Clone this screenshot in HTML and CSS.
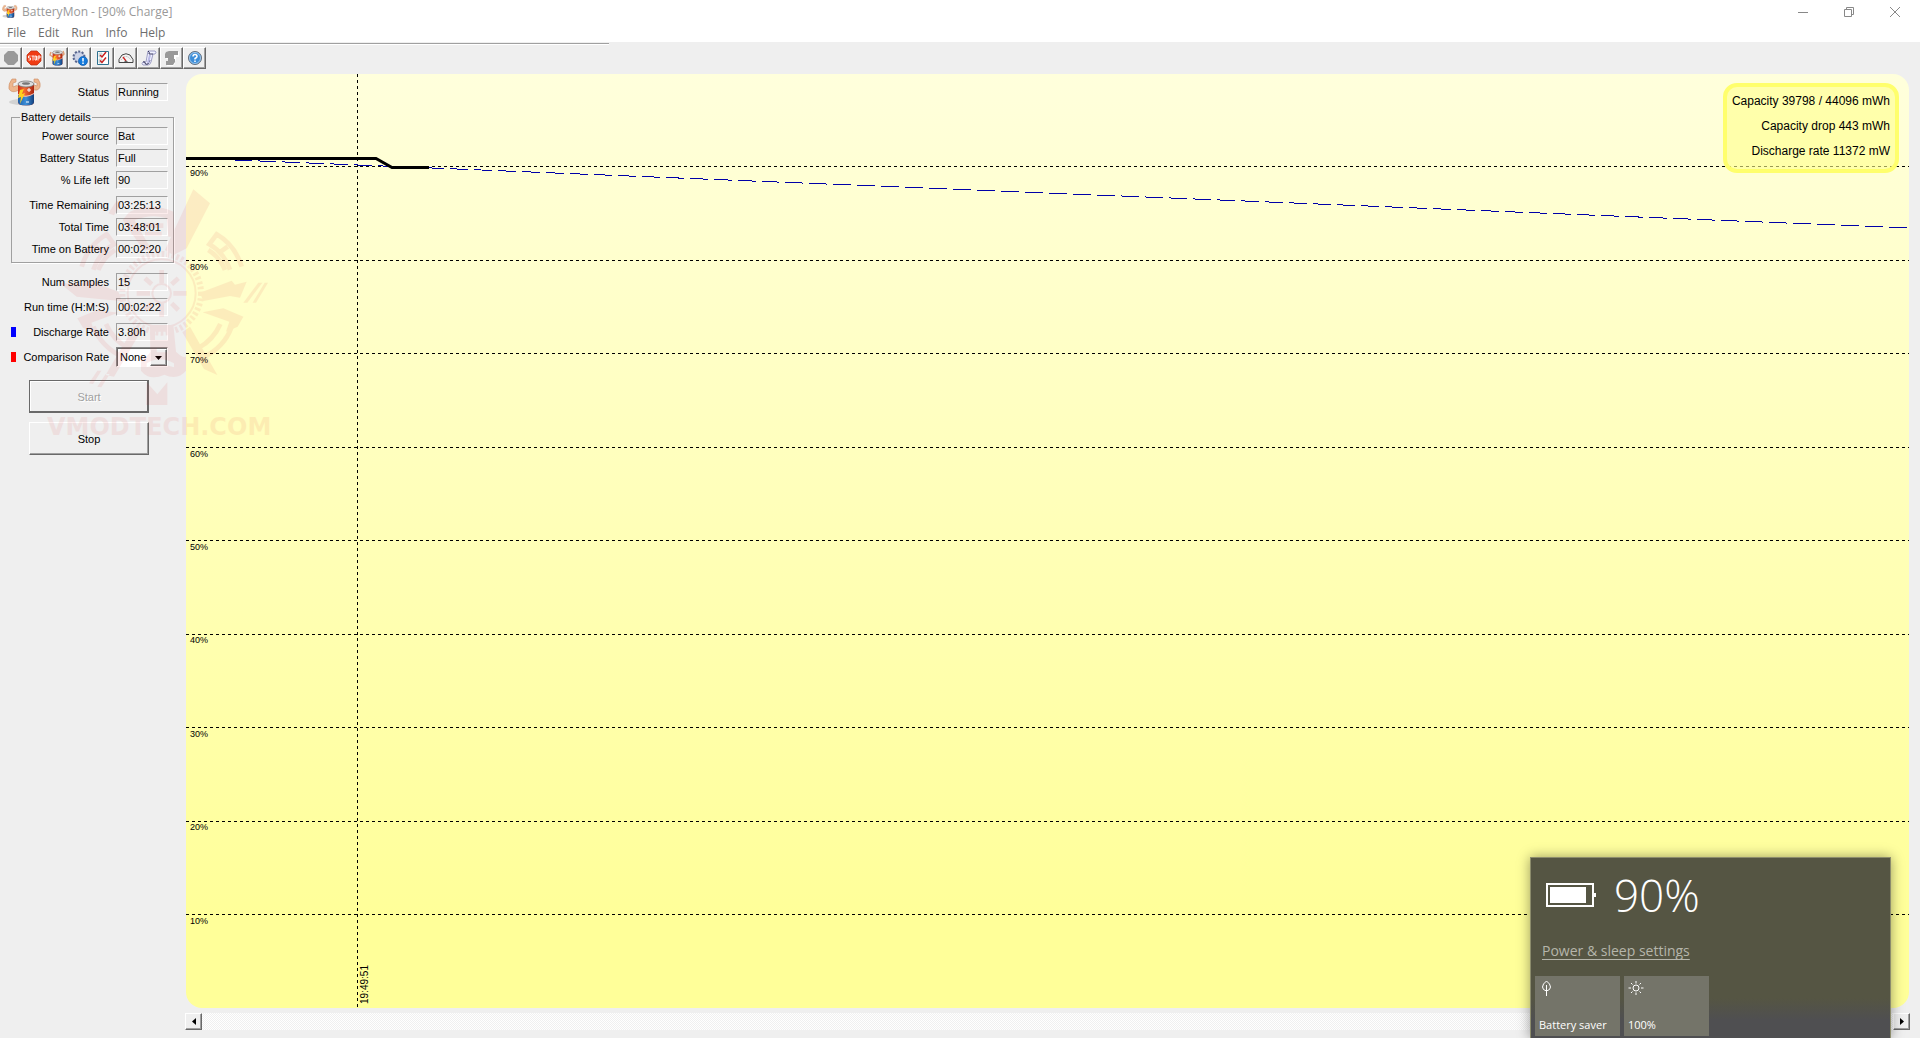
FILE: index.html
```html
<!DOCTYPE html>
<html lang="en">
  <head>
    <meta charset="utf-8">
    <title>BatteryMon - [90% Charge]</title>
    <link rel="stylesheet" href="styles.css">
  </head>
  <body>
    <svg class="defs" aria-hidden="true">
      <defs>
        <linearGradient id="red-can" x1="0" x2="1">
          <stop offset="0" stop-color="#c8321a" />
          <stop offset="0.4" stop-color="#f56a32" />
          <stop offset="1" stop-color="#a82410" />
        </linearGradient>
        <linearGradient id="blue-can" x1="0" x2="1">
          <stop offset="0" stop-color="#1d5fa8" />
          <stop offset="0.5" stop-color="#3d8fd8" />
          <stop offset="1" stop-color="#123f7c" />
        </linearGradient>
        <symbol id="can" viewBox="0 0 18 26">
          <path d="M1 4v18q0 3.500 8 3.500t8-3.500V4z" fill="url(#red-can)" />
          <path d="M1 15q8 4 16-1v8q0 3.500-8 3.500T1 22z" fill="url(#blue-can)" />
          <path d="M1 14.500q8 4 16-1" fill="none" stroke="#fff" stroke-width="0.700" />
          <ellipse cx="9" cy="4" rx="8" ry="3" fill="#ddd" stroke="#777" stroke-width="0.800" />
          <ellipse cx="9" cy="3.500" rx="4" ry="1.300" fill="#777" />
          <path d="M3 10l4-1-2 5 3-1-5 11 1-7-3 1z" fill="#ffd21e" />
          <path d="M10 10h4M12 8v4M9 22h3" stroke="#fff" stroke-width="1" />
        </symbol>
        <symbol id="strong-battery" viewBox="0 0 34 30">
          <ellipse cx="13" cy="25" rx="12" ry="3" fill="#d2d2d2" />
          <path d="M11 13q-7 4-10-1-1-5 3-10l4 0 0 3-3 1 0 4q4-3 7 0z" fill="#eeb68d" stroke="#c98b63" stroke-width="0.600" />
          <path d="M24 12q6 3 8-2 1-4-2-8l-4 0 0 3 3 1 0 3q-3-2-6 0z" fill="#eeb68d" stroke="#c98b63" stroke-width="0.600" />
          <use href="#can" x="9" y="3" width="18" height="26" />
        </symbol>
      </defs>
    </svg>

    <header class="titlebar">
      <svg class="app-icon" aria-hidden="true"><use href="#strong-battery" /></svg>
      <h1>BatteryMon - [90% Charge]</h1>
      <div class="window-controls">
        <button type="button" aria-label="Minimize"><svg viewBox="0 0 10 10"><path d="M0 5.500h10" /></svg></button>
        <button type="button" aria-label="Restore"><svg viewBox="0 0 10 10"><path d="M.5 2.500h7v7h-7zM2.500 2.500v-2h7v7h-2" /></svg></button>
        <button type="button" aria-label="Close"><svg viewBox="0 0 10 10"><path d="M0 0l10 10M10 0L0 10" /></svg></button>
      </div>
    </header>

    <nav class="menubar">
      <button type="button">File</button>
      <button type="button">Edit</button>
      <button type="button">Run</button>
      <button type="button">Info</button>
      <button type="button">Help</button>
    </nav>

    <div class="toolbar">
      <div class="toolbar-rule"></div>
      <div class="tools">
        <button type="button" aria-label="Start" disabled><svg viewBox="0 0 16 16"><path d="M5.500 2h6L15 5.500v6L11.500 15h-6L2 11.500v-6z" fill="#fff" /><path d="M5 1h6l4 4v6l-4 4H5l-4-4V5z" fill="#999" /></svg></button>
        <button type="button" aria-label="Stop"><svg viewBox="0 0 16 16"><path d="M5 1h6l4 4v6l-4 4H5l-4-4V5z" fill="#f03c14" stroke="#b8280c" stroke-width="0.700" /><path d="M4.500 6h-2v2h2v2h-2M5.500 6h3M7 6v4.500M9 6h1.500v4H9zM12 10.500V6h2v2h-2" fill="none" stroke="#fff" stroke-width="0.900" /></svg></button>
        <button type="button" aria-label="Battery information"><svg viewBox="0 0 16 16"><path d="M4 7L1 5l1-3M13 6l2-2-1-3" fill="none" stroke="#e0a078" stroke-width="1.500" /><use href="#can" x="3" y="0" width="11" height="16" /></svg></button>
        <button type="button" aria-label="System information"><svg viewBox="0 0 16 16"><circle cx="7" cy="7" r="5.500" fill="#b4bdd8" stroke="#57658c" stroke-width="2" stroke-dasharray="2 1.500" /><circle cx="7" cy="7" r="4" fill="#cdd3e6" /><circle cx="11" cy="11" r="4.500" fill="#147adb" stroke="#0c50a0" stroke-width="0.600" /><path d="M11 8v3.500M11 12.500v1.500" stroke="#fff" stroke-width="1.500" /></svg></button>
        <button type="button" aria-label="Configuration"><svg viewBox="0 0 16 16"><path d="M2.500 1.500h11v13h-11z" fill="#fff" stroke="#2e7190" /><path d="M4 3h3v4H4zM4 9h3v4H4z" fill="#e6eef2" stroke="#9bb" stroke-width="0.500" /><path d="M5 5l2 2 4-5M5 10.500l2 2 4-5" fill="none" stroke="#c82020" stroke-width="1.500" /></svg></button>
        <button type="button" aria-label="Discharge gauge"><svg viewBox="0 0 16 16"><path d="M1 12.500V9.500l3-4.500q4-2.500 8 0l3 4.500v3z" fill="#f4f4f4" stroke="#444" /><path d="M3 10q5-7 10 0" fill="none" stroke="#aaa" stroke-dasharray="1 1" /><path d="M8 11l-3-4" stroke="#d02020" stroke-width="1.300" /><path d="M6 12q2-3 4 0" fill="#666" /></svg></button>
        <button type="button" aria-label="View log"><svg viewBox="0 0 16 16"><path d="M7 1h7q2 1 0 3h-2l-2 8q-1 3-3 3H2q-2-1 0-3h3z" fill="#f1f2ff" stroke="#8888b8" stroke-width="0.800" /><path d="M7 1q2 1 1 3h4M2 12q2-1 2 1t3 1l2-4" fill="none" stroke="#34345c" /><path d="M9 5l-2 8" stroke="#b9b9e6" stroke-width="2" /></svg></button>
        <button type="button" aria-label="Close log" disabled><svg viewBox="0 0 16 16"><path d="M3 2h12v5h-3v3l-1 1v3l-2 2H3v-4h2V9H2z" fill="#fff" /><path d="M2 2l3-1h9v4h-4v4h1v3l-2 3H2v-4h2V8H1V4z" fill="#999" /></svg></button>
        <button type="button" aria-label="Help"><svg viewBox="0 0 16 16"><circle cx="8" cy="8" r="6.500" fill="#3d8ed9" stroke="#666f7c" /><circle cx="8" cy="8" r="5.500" fill="none" stroke="#c4def4" stroke-width="0.700" /><path d="M6 6.500q0-2 2-2t2 2q0 1-2 2v1M8 10.500V12" fill="none" stroke="#fff" stroke-width="1.500" /></svg></button>
      </div>
    </div>

    <main class="workspace">
      <section class="sidebar">
        <div class="status">
          <svg class="mascot" aria-hidden="true"><use href="#strong-battery" /></svg>
          <label for="status">Status</label>
          <output id="status">Running</output>
        </div>

        <fieldset class="details">
          <legend>Battery details</legend>
          <div class="field"><label for="source">Power source</label><output id="source">Bat</output></div>
          <div class="field"><label for="battery-status">Battery Status</label><output id="battery-status">Full</output></div>
          <div class="field"><label for="life">% Life left</label><output id="life">90</output></div>
          <div class="field times"><label for="remaining">Time Remaining</label><output id="remaining">03:25:13</output></div>
          <div class="field"><label for="total">Total Time</label><output id="total">03:48:01</output></div>
          <div class="field"><label for="on-battery">Time on Battery</label><output id="on-battery">00:02:20</output></div>
        </fieldset>

        <div class="samples">
          <div class="field"><label for="samples">Num samples</label><output id="samples">15</output></div>
          <div class="field"><label for="run-time">Run time (H:M:S)</label><output id="run-time">00:02:22</output></div>
          <div class="field"><i class="key discharge"></i><label for="rate">Discharge Rate</label><output id="rate">3.80h</output></div>
          <div class="field">
            <i class="key comparison"></i><label for="compare">Comparison Rate</label>
            <div class="combo">
              <select id="compare"><option>None</option></select>
              <span class="drop"><svg viewBox="0 0 7 4"><path d="M0 0h7L3.500 4z" /></svg></span>
            </div>
          </div>
        </div>

        <div class="actions">
          <button class="start" type="button" disabled>Start</button>
          <button type="button">Stop</button>
        </div>
      </section>

      <section class="graph">
        <div class="chart">
          <svg class="plot" viewBox="0 0 1723 934" preserveAspectRatio="none" aria-hidden="true">
            <path class="grid" d="M0 92H1723M0 186H1723M0 279H1723M0 373H1723M0 466H1723M0 560H1723M0 653H1723M0 747H1723M0 840H1723M171 0V934" />
            <path class="trend" d="M0 84L1723 154" />
            <path class="charge" d="M0 84.500H190L206 93.500H243" />
          </svg>
          <ol class="levels">
            <li></li>
            <li>90%</li>
            <li>80%</li>
            <li>70%</li>
            <li>60%</li>
            <li>50%</li>
            <li>40%</li>
            <li>30%</li>
            <li>20%</li>
            <li>10%</li>
          </ol>
          <time class="timestamp">19:49:51</time>
          <div class="readout">
            <p>Capacity 39798 / 44096 mWh</p>
            <p>Capacity drop 443 mWh</p>
            <p>Discharge rate 11372 mW</p>
          </div>
        </div>
        <div class="scrollbar">
          <button type="button" aria-label="Scroll left"><svg viewBox="0 0 4 7"><path d="M4 0v7L0 3.500z" /></svg></button>
          <button type="button" aria-label="Scroll right"><svg viewBox="0 0 4 7"><path d="M0 0v7l4-3.500z" /></svg></button>
        </div>
      </section>
    </main>

    <div class="watermark">
      <svg viewBox="0 0 720 740" aria-hidden="true">
        <path d="M460 58L510 100 440 235 400 255 375 240zM205 130L230 92 244 98 222 136zM248 150L268 126 335 240 310 240z" />
        <path d="M270 125q65-30 130 0l5 75h-20l-5-55q-45-15-95 5l10 45h-20zM310 160h60v14h-60zM315 185h50v12h-50z" />
        <path d="M60 340l70 0 10-10 95 35 10 28-60-5-75-8zM620 335l-20 48-30-5-80 15-10-25 95-36 10 12zM610 398l45-60h12l-45 60zM638 398l36-60h10l-36 60z" />
        <path d="M112 445l60-25 62 8-80 30 10 30-35-15zM610 440l-60-25-62 12 80 28-10 30 35-15zM450 470l82 145-40-18-65-110zM282 470l-85 145 25 5 80-135zM147 640l25-38 12 0-25 40zM172 650l25-38 12 0-25 40z" />
        <path class="arc" d="M125 290q20-65 75-97l22 30q-45 26-62 76M175 300q15-38 50-60M160 470q25 62 90 92l14-28q-45-24-66-72M605 290q-20-65-75-97l-22 30q45 26 62 76M555 300q-15-38-50-60M575 470q-22 62-86 92l-14-28q45-24 66-72M195 250l-28-20M535 250l28-20" />
        <circle class="teeth" cx="365" cy="370" r="118" />
        <circle class="rim" cx="365" cy="370" r="102" />
        <circle class="rim" cx="365" cy="370" r="28" />
        <path class="arc" d="M365 300v40M365 400v40M290 370h40M400 370h40M315 325l20 18M415 325l-20 18M315 420l20-20M415 420l-20-20" />
        <path d="M330 465h70l8 80q20 20 30 15l0 42q-25 30-65 12-45 20-70-12v-35q22-8 28-22zM345 485v25h38v-25zM350 535h32v12h-32zM320 580q40-25 82 0v12q-38-16-82 0z" fill-rule="evenodd" />
        <path d="M320 637h62l0 68-64 0zM320 637l32 36 30-36z" fill-rule="evenodd" />
      </svg>
      <strong>VMODTECH.COM</strong>
    </div>

    <aside class="flyout">
      <div class="charge-level">
        <svg viewBox="0 0 50 24" aria-hidden="true"><path d="M1 1h46v22H1z" fill="none" stroke="#fff" stroke-width="2" /><path d="M4 4h36v16H4zM48 10h2v4h-2z" fill="#fff" /></svg>
        <span>90%</span>
      </div>
      <a href="#">Power &amp; sleep settings</a>
      <div class="tiles">
        <button type="button">
          <svg viewBox="0 0 16 16" aria-hidden="true"><path d="M7.500 1q-4 3-4 6 0 3 4 4 4-1 4-4 0-3-4-6zM7.500 5v11" /></svg>
          Battery saver
        </button>
        <button type="button">
          <svg viewBox="0 0 16 16" aria-hidden="true"><circle cx="8" cy="8" r="3" /><path d="M8 1v2.500M8 12.500V15M.5 8H3M13 8h2.500M3 3l1.500 1.500M11.500 11.500L13 13M13 3l-1.500 1.500M4.500 11.500L3 13" /></svg>
          100%
        </button>
      </div>
    </aside>
  </body>
</html>
```
FILE: styles.css
```css
* {
  box-sizing: border-box;
}

body {
  position: relative;
  display: flex;
  flex-flow: column;
  min-height: 100vh;
  margin: 0;
  overflow: hidden;

  background: #efefef;
  font-family: "Liberation Sans", sans-serif;
  font-size: 11px;
  color: #000;
}

button {
  padding: 0;
  border: 0;

  background: none;
  font: inherit;
  color: inherit;
}

.defs {
  position: absolute;
  width: 0;
  height: 0;
}

/* Title bar and menu */
.titlebar,
.menubar {
  display: flex;
  align-items: center;

  background: #fff;
  font-family: "Open Sans", sans-serif;
  font-size: 12px;
}

.titlebar {
  height: 23px;
  padding-right: 2px;
  padding-left: 2px;
  color: #999;
}

.titlebar h1 {
  margin: 0 auto 0 4px;
  font-size: 12px;
  font-weight: normal;
}

.app-icon {
  width: 16px;
  height: 15px;
}

.window-controls {
  display: flex;
}

.window-controls button {
  display: flex;
  align-items: center;
  justify-content: center;
  width: 46px;
  height: 20px;
}

.window-controls svg {
  width: 10px;
  height: 10px;

  fill: none;
  stroke: #888;
}

.menubar {
  height: 19px;
  gap: 12px;
  padding: 0 7px;
  color: #6d6d6d;
}

/* Toolbar */
.toolbar {
  height: 32px;
  padding-top: 1px;
}

.toolbar-rule {
  width: 609px;
  max-width: 100%;
  height: 2px;
  margin-bottom: 2px;

  border-top: 1px solid #a0a0a0;
  border-bottom: 1px solid #fff;
}

.tools {
  display: flex;
  margin-left: -1px;
}

.tools button {
  display: flex;
  align-items: center;
  justify-content: center;
  width: 23px;
  height: 22px;

  border: 1px solid;
  border-color: #fff #696969 #696969 #fff;
  box-shadow: inset -1px -1px #a0a0a0;
}

.tools svg {
  width: 16px;
  height: 16px;
}

/* Sidebar */
.workspace {
  display: flex;
  flex: 1;
  padding: 0 11px 8px 0;
}

.sidebar {
  width: 186px;
}

.sidebar label {
  white-space: nowrap;
}

.status {
  display: flex;
  align-items: center;
  margin: 3px 18px 0 8px;
}

.status label {
  margin-right: 7px;
  margin-left: auto;
}

.mascot {
  width: 34px;
  height: 30px;
}

output {
  width: 52px;
  height: 18px;
  padding-left: 1px;

  border: 1px solid;
  border-color: #a0a0a0 #fff #fff #a0a0a0;
  line-height: 16px;
}

.details {
  display: grid;
  gap: 4px;
  margin: 4px 12px 0 11px;
  padding: 3px 5px 4px 10px;

  border: 1px solid #a0a0a0;
  box-shadow: 1px 1px #fff;
}

.details legend {
  margin-left: -2px;
  padding: 0 1px;
  line-height: 13px;
}

.field {
  display: flex;
  align-items: center;
  justify-content: flex-end;
  gap: 7px;
  height: 18px;
}

.times {
  margin-top: 3px;
}

.samples {
  display: grid;
  gap: 7px;
  margin: 10px 18px 0 11px;
}

.key {
  width: 5px;
  height: 10px;
  margin-right: auto;
}

.discharge {
  background: #00f;
}

.comparison {
  background: #f00;
}

.combo {
  position: relative;
  width: 52px;
  height: 20px;
}

.combo select {
  width: 52px;
  height: 20px;
  padding: 0 0 0 3px;

  appearance: none;
  border: 1px solid;
  border-color: #888 #fff #fff #888;
  border-radius: 0;
  box-shadow: inset 1px 1px #696969;
  background: #fff;
  font: inherit;
}

.drop {
  position: absolute;
  top: 2px;
  right: 1px;
  display: flex;
  align-items: center;
  justify-content: center;
  width: 17px;
  height: 17px;

  border: 1px solid;
  border-color: #fff #696969 #696969 #fff;
  box-shadow: inset -1px -1px #a0a0a0;
  background: #efefef;
  pointer-events: none;
}

.drop svg {
  width: 7px;
  height: 4px;
}

.actions {
  display: grid;
  gap: 9px;
  margin: 14px 37px 0 29px;
}

.actions button {
  height: 33px;

  border: 1px solid;
  border-color: #fff #696969 #696969 #fff;
  box-shadow: inset -1px -1px #a0a0a0;
}

.actions .start {
  border-color: #696969;
  box-shadow: inset -1px -1px #696969, inset 1px 1px #fff;
  color: #a0a0a0;
  text-shadow: 1px 1px #fff;
}

/* Graph */
.graph {
  display: flex;
  flex: 1;
  flex-flow: column;
  gap: 5px;
}

.chart {
  position: relative;
  flex: 1;
  overflow: hidden;

  border-radius: 16px;
  background: linear-gradient(#ffffdc, #ffff99 90%);
}

.plot {
  position: absolute;
  width: 100%;
  height: 100%;
}

.plot path {
  fill: none;
  vector-effect: non-scaling-stroke;
}

.grid {
  stroke: #000;
  stroke-dasharray: 3 3;
  shape-rendering: crispEdges;
}

.trend {
  stroke: #0000a8;
  stroke-dasharray: 18 6;
  shape-rendering: crispEdges;
}

.plot .charge {
  stroke: #000;
  stroke-width: 3px;
}

.levels {
  display: grid;
  grid-template-rows: repeat(10, 1fr);
  height: 100%;
  margin: 0;
  padding: 0 4px;

  font-size: 9px;
  line-height: 12px;
  list-style: none;
}

.timestamp {
  position: absolute;
  bottom: 4px;
  left: 174px;

  font-size: 10px;
  line-height: 10px;
  writing-mode: vertical-rl;
  transform: rotate(180deg);
}

.readout {
  position: absolute;
  top: 9px;
  right: 10px;
  padding: 2px 5px 5px 5px;

  border: 4px solid #ffff6c;
  border-radius: 14px;
  background: rgba(255, 255, 140, 0.6);
  font-size: 12px;
  line-height: 25px;
  text-align: right;
}

.readout p {
  margin: 0;
}

.scrollbar {
  display: flex;
  justify-content: space-between;
  margin: 0 -1px;
  background: repeating-conic-gradient(#fff 0 25%, #f0f0f0 0 50%) 0 0 / 2px 2px;
}

.scrollbar button {
  display: flex;
  align-items: center;
  justify-content: center;
  width: 17px;
  height: 17px;

  border: 1px solid;
  border-color: #fff #696969 #696969 #fff;
  box-shadow: inset -1px -1px #a0a0a0;
  background: #efefef;
}

.scrollbar svg {
  width: 4px;
  height: 7px;
}

/* Translucent emblem over the left edge of the graph */
.watermark {
  position: absolute;
  top: 170px;
  left: 40px;
  width: 240px;

  opacity: 0.08;
  color: #e02020;
  pointer-events: none;
}

.watermark svg {
  display: block;
  width: 240px;
  fill: currentColor;
}

.watermark .arc,
.watermark .rim,
.watermark .teeth {
  fill: none;
  stroke: currentColor;
  stroke-width: 14px;
}

.watermark .rim {
  stroke-width: 6px;
}

.watermark .teeth {
  stroke-width: 18px;
  stroke-dasharray: 8 7;
}

.watermark strong {
  display: block;
  padding-left: 7px;

  font-family: "DejaVu Sans", sans-serif;
  font-size: 24px;
  line-height: 20px;
}

/* Power flyout */
.flyout {
  position: absolute;
  right: 29px;
  bottom: 0;
  width: 361px;
  padding: 13px 4px 2px;

  border: 1px solid #8c8c6c;
  border-bottom: 0;
  box-shadow: 0 0 12px rgba(0, 0, 0, 0.4);
  background: linear-gradient(#555543 78%, #4f4f51 90%);
  font-family: "Open Sans", sans-serif;
  color: #fff;
}

.charge-level {
  display: flex;
  align-items: center;
  gap: 18px;
  padding-left: 11px;
}

.charge-level svg {
  width: 50px;
  height: 24px;
}

.charge-level span {
  font-size: 44px;
  font-weight: 300;
  line-height: 48px;
}

.flyout a {
  display: block;
  width: max-content;
  margin: 21px 7px 14px;

  font-size: 14px;
  line-height: 22px;
  color: #b5b5ab;
  text-underline-offset: 3px;
}

.tiles {
  display: flex;
  gap: 4px;
}

.tiles button {
  display: flex;
  flex-flow: column;
  justify-content: space-between;
  width: 85px;
  height: 60px;
  padding: 4px;

  background: #747469;
  font-size: 11px;
  line-height: 15px;
  text-align: left;
}

.tiles svg {
  width: 16px;
  height: 16px;

  fill: none;
  stroke: #fff;
}
```
